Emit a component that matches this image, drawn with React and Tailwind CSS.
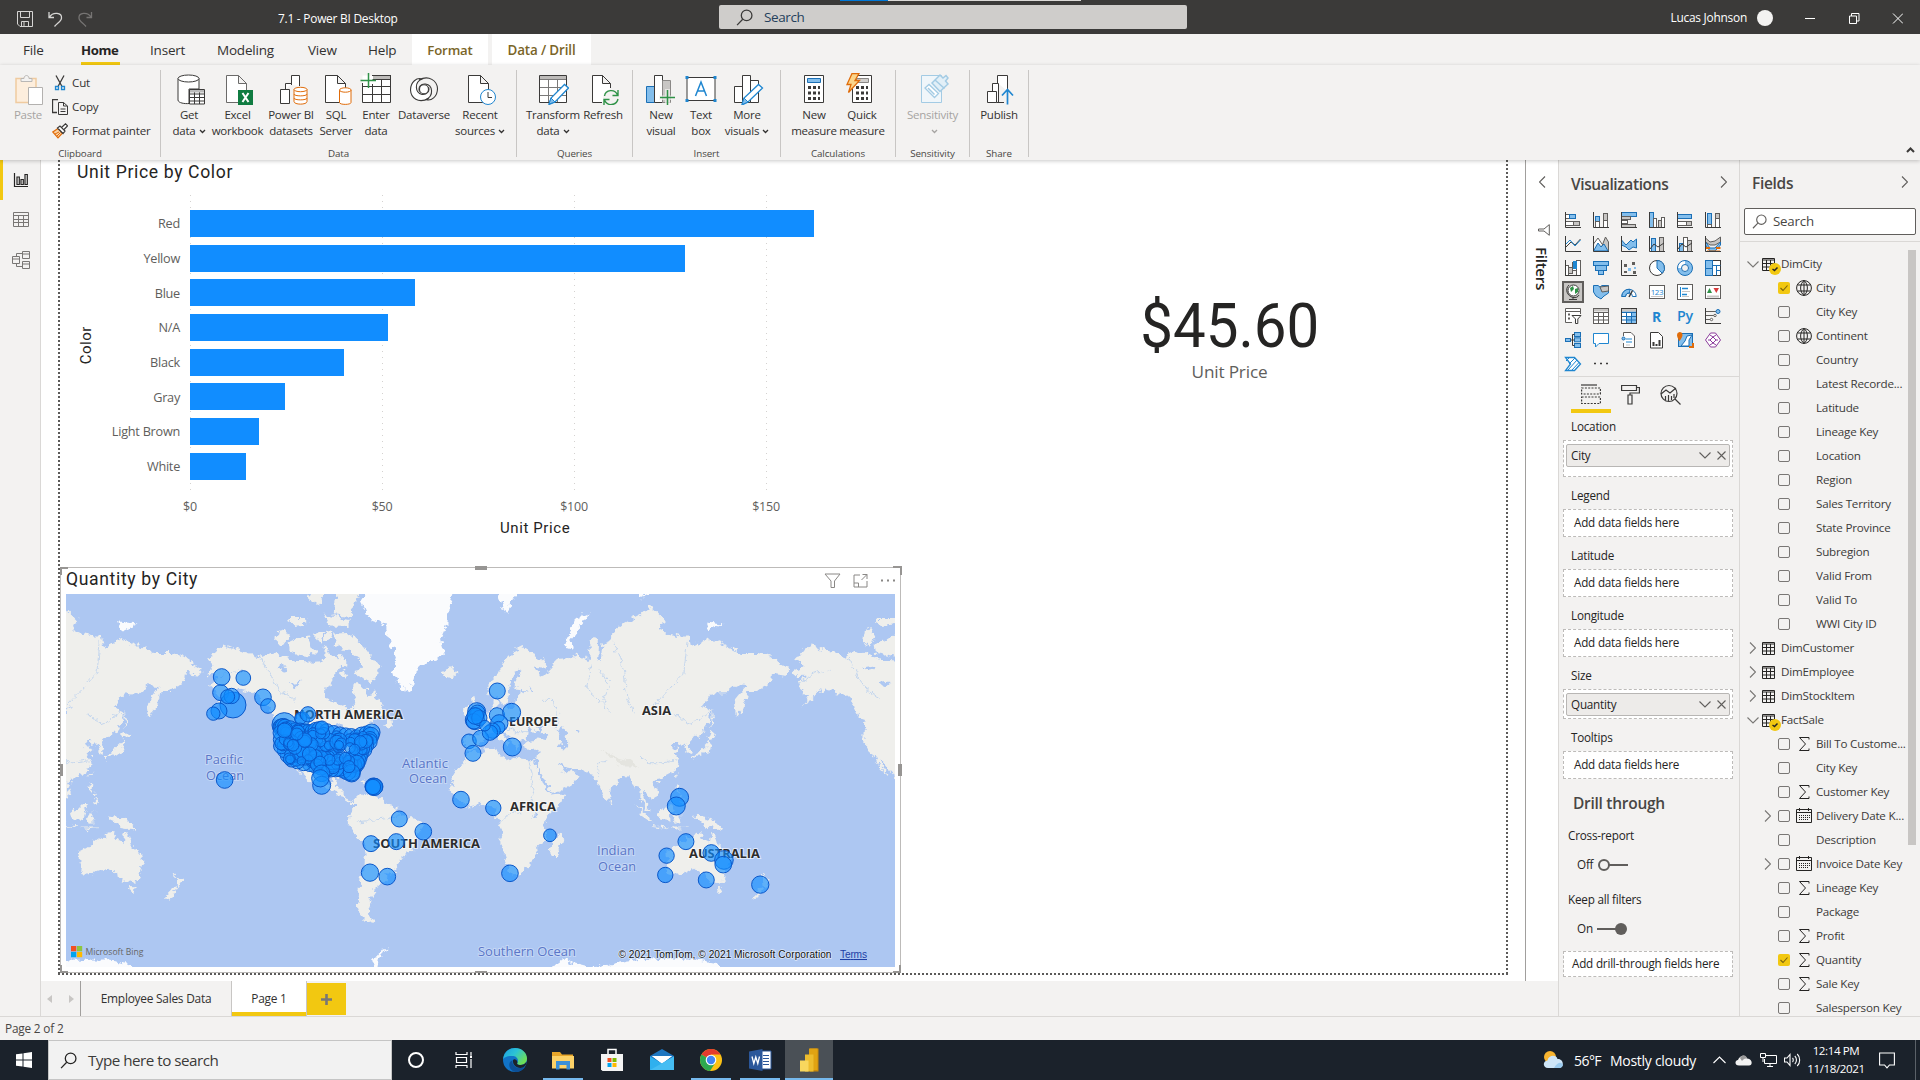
import React from "react";

const INK = "#3b3a39";
const BLUE = "#1f86d0";
const SKY = "#83beec";
const ORANGE = "#e06c0a";
const GREEN = "#2f9247";

/* ---------- ribbon icons (32 x 32) ---------- */

function Ico({ children, s = 32, vb = "0 0 32 32", className = "", ...rest }) {
  return (
    <svg width={s} height={s} viewBox={vb} fill="none" stroke={INK} strokeWidth="1" className={"shrink-0 " + className} {...rest}>
      {children}
    </svg>
  );
}

const page = "M4.5 2.5H16.5L24.5 10.5V29.5H4.5Z M16.5 2.5V10.5H24.5";

const ribbonIcons = {
  paste: (
    <Ico className="translate-x-[2px]">
      <path d="M2 5.500H22V29.500H2Z" fill="#fdeedd" stroke="#f0cba0" strokeWidth="1.500" />
      <path d="M7 8.500V5.500H10C10 1.500 15 1.500 15 5.500H18V8.500Z" fill="#f3f2f1" stroke="#b9b7b5" />
      <path d="M14.500 14.500H28.500V31.500H14.500Z" fill="#fff" stroke="#b3b1af" />
    </Ico>
  ),
  getData: (
    <Ico>
      <path d="M5 5.500V27C5 30 12 31 16 30.500V16H26V5.500" fill="#fff" />
      <ellipse cx="15.500" cy="5.500" rx="10.500" ry="3.500" fill="#fff" />
      <path d="M16.500 16.500H31.500V31H16.500Z M16.500 21H31.500M16.500 24.500H31.500M16.500 28H31.500M21.500 19V31M26.500 19V31" fill="#fff" />
      <path d="M17 17H31V19.500H17Z" fill="#bbb" stroke="none" />
    </Ico>
  ),
  excel: (
    <Ico>
      <path d={page} fill="#fff" stroke="#6b6a69" />
      <path d="M16 17H31V32H16Z" fill="#107c41" stroke="none" />
      <path d="M20.500 20L26.500 29M26.500 20L20.500 29" stroke="#fff" strokeWidth="2" />
    </Ico>
  ),
  datasets: (
    <Ico className="translate-x-[2px]">
      <path d="M3.500 16.500H12.500V30.500H3.500Z M8.500 16.500V10.500H14.500M14.500 12V2.500H22.500V13" fill="#fff" />
      <path d="M17 16.500V28.500C17 32 30 32 30 28.500V16.500" fill="#fff" stroke={ORANGE} />
      <ellipse cx="23.500" cy="16.500" rx="6.500" ry="2.200" fill="#fff" stroke={ORANGE} />
      <path d="M17 21C17 23.500 30 23.500 30 21M17 25C17 27.500 30 27.500 30 25" stroke={ORANGE} />
    </Ico>
  ),
  sql: (
    <Ico>
      <path d="M5.500 2.500H17.500L25.500 10.500V29.500H5.500Z M17.500 2.500V10.500H25.500" fill="#fff" />
      <path d="M19.500 17V29.500C19.500 32 31 32 31 29.500V17" fill="#fff" stroke={ORANGE} />
      <ellipse cx="25.300" cy="17" rx="5.800" ry="2.200" fill="#fff" stroke={ORANGE} />
    </Ico>
  ),
  enter: (
    <Ico>
      <path d="M2.500 2.500H30.500V29.500H2.500Z" fill="#fff" stroke="none" />
      <path d="M13 2.500H30V6.500H13Z" fill="#bdbbb9" stroke="none" />
      <path d="M30.500 2V29.500H2.500V10M2.500 13.500H30M2.500 21.500H30M12.500 6.500H30M12.500 11V29M21.500 6.500V29M12 2.500H30" />
      <path d="M8.500 0V15M0.500 7.500H16" stroke={GREEN} strokeWidth="1.500" />
    </Ico>
  ),
  dataverse: (
    <Ico>
      <g strokeWidth="1.100">
        <path d="M21 25.500C10 31 3 25 2.500 17C2.500 9 9 4 14 6C6 9 7 20 14 21.500C19 22 22 18 20.500 14" fill="#fff" />
        <path d="M11 7C21 1.500 29 8 29.500 15.500C29.500 24 23 28.500 18 26.500C26 23 25 12 17.500 11C13 10.500 10 14 11.500 18.500" />
        <circle cx="16" cy="16.200" r="4.500" fill="#fff" />
      </g>
    </Ico>
  ),
  recent: (
    <Ico>
      <path d={page} fill="#fff" />
      <circle cx="24" cy="24" r="7.500" fill="#fff" stroke={BLUE} />
      <path d="M24 19V24.500H28" />
    </Ico>
  ),
  transform: (
    <Ico>
      <path d="M2.500 2.500H29.500V29.500H2.500Z" fill="#fff" />
      <path d="M3 3H29V6.500H3Z" fill="#bdbbb9" stroke="none" />
      <path d="M3 6.500H29M3 14.500H29M3 22.500H29M11.500 7V29M20.500 7V29" stroke="#7a7978" />
      <path d="M12 31.500L14 25L27.500 11.500L31.500 15L18 29Z" fill="#fff" stroke={BLUE} strokeWidth="1.300" />
      <path d="M12 31L14 25L18 29Z" fill={SKY} stroke={BLUE} />
    </Ico>
  ),
  refresh: (
    <Ico>
      <path d="M15 29.500H5.500V2.500H15.500L23.500 10.500V15M15.500 2.500V10.500H23.500" fill="#fff" />
      <circle cx="24" cy="24.500" r="8" fill="#f3f2f1" stroke="none" />
      <g stroke={GREEN} strokeWidth="1.400">
        <path d="M17.500 23C18.500 16.500 28 15.500 30.500 22M31 17V22.500H25.500" />
        <path d="M31 26C29.500 33 20 33.500 17.500 27M17 32V26.500H22.500" />
      </g>
    </Ico>
  ),
  newVisual: (
    <Ico>
      <path d="M1.500 13.500H9.500V29.500H1.500Z" fill={SKY} stroke="#1b6fb5" />
      <path d="M9.500 2.500H17.500V29.500H9.500Z" fill="#fff" />
      <path d="M17.500 7.500H25.500V29.500H17.500Z" fill="#c8c6c4" stroke="#8a8886" />
      <path d="M20 16H25V32H20ZM14 22.500H31V27H14Z" fill="#f3f2f1" stroke="none" opacity=".7" />
      <path d="M22.500 17V32M15 24.500H30" stroke={GREEN} strokeWidth="1.500" />
    </Ico>
  ),
  textBox: (
    <Ico>
      <path d="M2 4.500H30V27.500H2Z" fill="#fff" />
      <path d="M10.500 23L16 9L21.500 23M12.500 18H19.500" stroke={BLUE} strokeWidth="1.500" />
      <path d="M0.500 3H3.500V6H0.500ZM28.500 3H31.500V6H28.500ZM0.500 26H3.500V29H0.500ZM28.500 26H31.500V29H28.500Z" fill={BLUE} stroke="none" />
    </Ico>
  ),
  moreVisuals: (
    <Ico className="translate-x-px">
      <path d="M2.500 13.500H10.500V29.500H2.500Z M10.500 2.500H18.500V29.500H10.500Z M18.500 7.500H26.500V29.500H18.500Z" fill="#fff" />
      <path d="M10 32L12 25L26.500 11.500L30.500 15L16 29Z" fill="#fff" stroke={BLUE} strokeWidth="1.300" />
      <path d="M10 31.500L12 25L16 29Z" fill={SKY} stroke={BLUE} />
    </Ico>
  ),
  measure: (
    <Ico>
      <path d="M6.500 2.500H25.500V29.500H6.500Z" fill="#fff" />
      <path d="M9.500 5.500H22.500V9.500H9.500Z" fill={SKY} stroke="#1b6fb5" />
      <path d="M10 14.500H22M10 20H22M10 25.500H22" strokeWidth="3" strokeDasharray="3 2" />
    </Ico>
  ),
  quick: (
    <Ico className="-translate-x-[3px]">
      <path d="M9.500 2.500H28.500V29.500H9.500Z" fill="#fff" />
      <path d="M13.500 5.500H25.500V9.500H13.500Z" fill="#d2d0ce" stroke="#8a8886" />
      <path d="M13 14.500H25M13 20H25M13 25.500H25" strokeWidth="3" strokeDasharray="3 2" />
      <path d="M9 0.500H16L12 7.500H16.500L5.500 19.500L8 11.500H4Z" fill="#fbd58b" stroke={ORANGE} strokeWidth="1.300" />
    </Ico>
  ),
  sensitivity: (
    <Ico className="translate-x-[2px]">
      <g stroke="#a3cbe4">
        <path d="M2.500 2.500H22.500V29.500H2.500Z" fill="#f0f6fa" />
        <path d="M6 15L10 11.500L19.500 20.500L15.500 24.500Z" fill="#fff" strokeWidth="1.300" />
        <path d="M9 15L15.500 21.500" strokeWidth="1.500" />
        <path d="M13 10L21 2L24 5L27 2.500L29 5L26.500 8L29 11L21 18.500Z" fill="#e2eff7" strokeWidth="1.500" />
        <path d="M16 7L25.500 15.500" strokeWidth="1.500" />
      </g>
    </Ico>
  ),
  publish: (
    <Ico>
      <path d="M4.500 18.500H13.500V29.500H4.500Z M9.500 18V10.500H15.500V29.500M14.500 10V2.500H24.500V18M13.500 29.500H21" fill="#fff" />
      <path d="M24.500 31.500V17M19 22.500L24.500 16.500L30 22.500" stroke={BLUE} strokeWidth="1.700" />
    </Ico>
  ),
};

function Caret({ className = "" }) {
  return (
    <svg width="7" height="5" viewBox="0 0 7 5" fill="none" stroke="currentColor" strokeWidth="1.300" className={"ml-[3px] inline-block " + className}>
      <path d="M1 1L3.500 3.500L6 1" />
    </svg>
  );
}

function RBtn({ icon, a, b, caret, w, dim }) {
  return (
    <div className={"flex flex-col items-center pt-[7px] " + w + (dim ? " text-[#a6a4a2]" : " text-[#323130]")}>
      {ribbonIcons[icon]}
      <div className="mt-[2px] h-4 text-[11.5px] leading-4 tracking-[-0.02em] whitespace-nowrap">{a}</div>
      <div className="flex h-4 items-center text-[11.5px] leading-4 tracking-[-0.02em] whitespace-nowrap">
        {b}
        {caret && <Caret />}
      </div>
    </div>
  );
}

function Group({ label, w, pl = "", children }) {
  return (
    <div className={"relative mt-[5px] flex h-[87px] flex-col border-r border-[#c8c6c4] " + w}>
      <div className={"-mt-[4px] flex flex-1 items-start " + pl}>{children}</div>
      <div className="h-3 text-center text-[9.8px] leading-[17px] tracking-[-0.01em] text-[#484644]">{label}</div>
    </div>
  );
}

function MiniRow({ icon, text }) {
  return (
    <div className="flex h-6 items-center">
      <div className="w-5">{icon}</div>
      <span className="text-[11.600px] tracking-[-0.015em] whitespace-nowrap text-[#323130]">{text}</span>
    </div>
  );
}

function SearchGlyph({ s = 16, color = INK, className = "" }) {
  return (
    <svg width={s} height={s} viewBox="0 0 16 16" fill="none" stroke={color} strokeWidth="1.200" className={className}>
      <circle cx="10" cy="6" r="5" />
      <path d="M6.300 9.700L1 15.200" />
    </svg>
  );
}

function TitleBar() {
  return (
    <div className="flex h-[34px] bg-[#3b3a39] text-white">
      <div className="flex w-[719px] items-center pt-[3px] pl-[17px]">
        <svg width="76" height="18" viewBox="0 0 76 18" fill="none" stroke="#d6d5d4" strokeWidth="1">
          <path d="M0.500 1.500H15.500V16.500H3L0.500 14Z M3.500 1.500V7.500H12.500V1.500M4.500 16.500V11.500H11.500V16.500M7 12V16" />
          <path d="M32 2V7.500H37M32.500 7C36 1.500 45 2.500 44.500 8C44.500 11 41 12.500 37.500 16.500" strokeWidth="1.300" />
          <path d="M74.500 2V7.500H69.500M74 7C70.500 1.500 61.500 2.500 62 8C62 11 65.500 12.500 69 16.500" stroke="#767473" strokeWidth="1.300" />
        </svg>
        <span className="ml-[185px] text-[11.9px] tracking-[-0.02em]">7.1 - Power BI Desktop</span>
      </div>
      <div className="relative flex w-[468px] pt-[5px]">
        <div className="absolute top-0 left-[121px] flex h-px w-[241px] bg-[#dcdad8]">
          <div className="h-px w-12 bg-[#0078d7]" />
        </div>
        <div className="flex h-6 w-full items-center rounded-[2px] bg-[#cfcdcb] pl-[17px]">
          <SearchGlyph s={17} />
          <span className="ml-[11px] text-[13.5px] tracking-[-0.03em] text-[#25405c]">Search</span>
        </div>
      </div>
      <div className="flex flex-1 items-center justify-end pt-px pr-[17px]">
        <span className="text-[11.9px] tracking-[-0.02em]">Lucas Johnson</span>
        <span className="ml-[10px] h-4 w-4 rounded-full bg-[#f3f2f1]" />
        <svg width="98" height="11" viewBox="0 0 98 11" fill="none" stroke="#fff" strokeWidth="1" className="mt-[2px] ml-[32px]">
          <path d="M0 5.500H10M44.500 3H51.500V10.500H44.500ZM46.500 3V0.500H54V8H51.500M88 0.500L98 10.500M98 0.500L88 10.500" />
        </svg>
      </div>
    </div>
  );
}

function TabsRow() {
  const t = "flex h-full items-center pt-[2px] text-[13.500px] text-[#323130] tracking-[-0.015em] whitespace-nowrap";
  return (
    <div className="flex h-[31px] bg-[#f3f2f1]">
      <div className={t + " w-[81px] pl-[23px]"}>File</div>
      <div className="relative flex w-[69px] items-center pt-[2px] text-[13.200px] font-bold tracking-[-0.03em] text-[#252423]">
        Home
        <span className="absolute bottom-0 left-0 h-[3px] w-[39px] bg-[#f2c811]" />
      </div>
      <div className={t + " w-[67px]"}>Insert</div>
      <div className={t + " w-[91px]"}>Modeling</div>
      <div className={t + " w-[60px]"}>View</div>
      <div className={t + " w-[44px]"}>Help</div>
      <div className="mr-1 flex w-[76px] items-center justify-center bg-white pt-[2px] text-[13.200px] font-semibold tracking-[-0.01em] text-[#7a6528]">Format</div>
      <div className="flex w-[99px] items-center justify-center bg-white pt-[2px] text-[13.400px] font-semibold tracking-[-0.01em] text-[#7a6528]">Data / Drill</div>
    </div>
  );
}

function Ribbon() {
  return (
    <div className="relative z-10 flex h-[95px] bg-[#f3f2f1] shadow-[0_1px_4px_rgba(0,0,0,0.22)]">
      <Group label="Clipboard" w="w-[161px]" pl="pl-[6px]">
        <RBtn icon="paste" a="Paste" w="w-[44px] mr-[2px]" dim />
        <div className="pt-[5px]">
          <MiniRow
            text="Cut"
            icon={
              <Ico s={16} vb="0 0 16 16">
                <path d="M4 0.500L10 11.500M12 0.500L6 11.500" strokeWidth="1.300" />
                <path d="M3.500 11.500H6.500V14.500H3.500ZM9.500 11.500H12.500V14.500H9.500Z" stroke={BLUE} strokeWidth="1.300" />
              </Ico>
            }
          />
          <MiniRow
            text="Copy"
            icon={
              <Ico s={16} vb="0 0 16 16">
                <path d="M5 13.500H0.500V0.500H6" strokeWidth="1.300" />
                <path d="M6.500 3.500H11.500L15.500 7V15.500H6.500Z M11.500 3.500V7H15.500M8.500 10H13.500M8.500 12.500H13.500" />
              </Ico>
            }
          />
          <MiniRow
            text="Format painter"
            icon={
              <Ico s={16} vb="0 0 16 16">
                <path d="M6 5.500L0.800 9L6 14.800L10.500 10Z" fill="#fbd0a0" stroke={ORANGE} strokeWidth="1.200" />
                <path d="M3 11L7 9M5 13L8.500 9.500" stroke={ORANGE} />
                <path d="M5.500 5L8 3L13 8L11 10.500ZM9.500 4.500L13.500 0.800L15.500 2.800L12 6.500" strokeWidth="1.200" fill="#fff" />
              </Ico>
            }
          />
        </div>
      </Group>
      <Group label="Data" w="w-[356px]" pl="pl-[6px]">
        <RBtn icon="getData" a="Get" b="data" caret w="w-[44px]" />
        <RBtn icon="excel" a="Excel" b="workbook" w="w-[53px]" />
        <RBtn icon="datasets" a="Power BI" b="datasets" w="w-[54px]" />
        <RBtn icon="sql" a="SQL" b="Server" w="w-[36px]" />
        <RBtn icon="enter" a="Enter" b="data" w="w-[44px]" />
        <RBtn icon="dataverse" a="Dataverse" w="w-[52px]" />
        <RBtn icon="recent" a="Recent" b="sources" caret w="w-[60px]" />
      </Group>
      <Group label="Queries" w="w-[116px]" pl="pl-[7px]">
        <RBtn icon="transform" a="Transform" b="data" caret w="w-[58px]" />
        <RBtn icon="refresh" a="Refresh" w="w-[42px]" />
      </Group>
      <Group label="Insert" w="w-[148px]" pl="pl-[8px]">
        <RBtn icon="newVisual" a="New" b="visual" w="w-[40px]" />
        <RBtn icon="textBox" a="Text" b="box" w="w-[40px]" />
        <RBtn icon="moreVisuals" a="More" b="visuals" caret w="w-[52px]" />
      </Group>
      <Group label="Calculations" w="w-[115px]" pl="pl-[9px]">
        <RBtn icon="measure" a="New" b="measure" w="w-[48px]" />
        <RBtn icon="quick" a="Quick" b="measure" w="w-[48px]" />
      </Group>
      <Group label="Sensitivity" w="w-[74px]" pl="justify-center">
        <RBtn icon="sensitivity" a="Sensitivity" caret w="w-[60px]" dim />
      </Group>
      <Group label="Share" w="w-[59px]" pl="justify-center">
        <RBtn icon="publish" a="Publish" w="w-[50px]" />
      </Group>
      <div className="flex flex-1 items-end justify-end pr-[5px] pb-[7px]">
        <svg width="9" height="6" viewBox="0 0 9 6" fill="none" stroke={INK} strokeWidth="2">
          <path d="M1 5L4.500 1.500L8 5" />
        </svg>
      </div>
    </div>
  );
}

/* ---------- left rail ---------- */

function Rail() {
  return (
    <div className="relative flex w-[41px] shrink-0 flex-col items-center border-r border-[#dad8d6] bg-[#f3f2f1]">
      <span className="absolute top-0 left-0 h-10 w-[3px] bg-[#f2c811]" />
      <div className="flex h-10 items-center">
        <Ico s={16} vb="0 0 16 16" stroke="#252423" strokeWidth="1.200" className="ml-px">
          <path d="M1.500 1V14.500H15M4 5H6.300V12.500H4ZM8 7.500H10.300V12.500H8ZM12 2.500H14.300V12.500H12Z" />
        </Ico>
      </div>
      <div className="flex h-10 items-center">
        <Ico s={16} vb="0 0 16 16" stroke="#797775" className="ml-px">
          <path d="M0.500 0.500H15.500V14.500H0.500ZM0.500 3.500H15.500M0.500 7.500H15.500M0.500 10.500H15.500M5.500 3.500V14.500M10.500 3.500V14.500" />
        </Ico>
      </div>
      <div className="flex h-10 items-center">
        <Ico s={18} vb="0 0 18 18" stroke="#797775" className="ml-px">
          <path d="M0.500 5.500H7.500V12.500H0.500ZM0.500 8H7.500M10.500 0.500H17.500V7.500H10.500ZM10.500 3H17.500M10.500 10.500H17.500V17.500H10.500ZM10.500 13H17.500M4.500 5.500V2.500H10.500M4.500 12.500V15.500H10.500" />
        </Ico>
      </div>
    </div>
  );
}

/* ---------- bar chart ---------- */

const bars = [
  ["Red", 624],
  ["Yellow", 495],
  ["Blue", 225],
  ["N/A", 197.500],
  ["Black", 153.500],
  ["Gray", 95],
  ["Light Brown", 69],
  ["White", 56],
];

function BarChart() {
  return (
    <div className="flex h-[407px] flex-col">
      <div className="h-[35px] pt-px pl-[17px] font-['Roboto'] text-[17.600px] leading-[22px] tracking-[0.036em] text-[#252423]">Unit Price by Color</div>
      <div className="flex">
        <div className="flex w-[46px] items-center justify-center pt-[2px] pl-[5px]">
          <span className="-rotate-90 font-['Roboto'] text-[15px] tracking-[0.03em] text-[#252423]">Color</span>
        </div>
        <div className="w-[84px] pt-[12px] pr-[10px]">
          {bars.map(([n]) => (
            <div key={n} className="flex h-[34.700px] items-center justify-end pb-[1px] text-[12.700px] tracking-[-0.02em] whitespace-nowrap text-[#605e5c]">{n}</div>
          ))}
        </div>
        <div className="relative h-[299px] flex-1 pt-[15px]">
          <div className="absolute inset-0 flex">
            {[0, 1, 2, 3].map((i) => (
              <div key={i} className="h-full w-[192px] shrink-0 bg-[repeating-linear-gradient(to_bottom,#d4d2d0_0_1px,transparent_1px_6px)] bg-[length:1px_100%] bg-no-repeat" />
            ))}
          </div>
          {bars.map(([n, w]) => (
            <div key={n} className="relative h-[34.700px]">
              <div className="h-[27px] bg-[#118dff]" style={{ width: w }} />
            </div>
          ))}
        </div>
      </div>
      <div className="ml-[34px] flex pt-[4px] text-[12.500px] leading-[18px] tracking-[-0.02em] text-[#605e5c]">
        {["$0", "$50", "$100", "$150"].map((v) => (
          <span key={v} className="w-[192px] shrink-0 text-center">{v}</span>
        ))}
      </div>
      <div className="ml-[440px] pt-[2px] font-['Roboto'] text-[15px] leading-[20px] tracking-[0.04em] text-[#252423]">Unit Price</div>
    </div>
  );
}

/* ---------- map ---------- */

const K = 1.6306;
const R = 93.4;
const px = (lon) => 414 + K * lon;
const py = (lat) => 220 - R * Math.asinh(Math.tan((lat * Math.PI) / 180));
const toPath = (s) => {
  const n = s.split(" ").map((p) => p.split(",").map(Number));
  return "M" + n.map(([a, b]) => px(a).toFixed(1) + " " + py(b).toFixed(1)).join("L") + "Z";
};

const land = [
  "-168,65.5 -162,66.5 -166,68.3 -162,70.2 -156.5,71.3 -150,70.5 -141,69.7 -135,69 -129,70 -124,69.5 -118,69 -113,68 -108,68 -102,67.8 -96,68 -95,71.5 -92,69.5 -88,68.5 -85,69.5 -82,68.5 -82,67 -86,66.3 -90,64 -94,61 -94.5,59 -92.5,57 -87,56 -82.3,55 -82,52.8 -79.8,51.3 -79,54 -76.5,56.5 -78,59 -77.5,62.3 -73.5,62.3 -70,60.8 -69.5,58.8 -66,58.8 -64.5,60.2 -62,57 -60,55 -56,52.5 -58,51.3 -66,50.2 -69,48.5 -65,49.2 -64.5,46.5 -60.5,47 -61,45.3 -66,43.5 -65,45.3 -70,43.7 -70.7,42 -74,40.6 -75.5,38 -76,36.5 -75.7,35.2 -78,34 -81,32 -81.4,30.4 -80,27 -80.5,25.2 -82,26.8 -82.8,29 -84.5,30 -89,30.3 -90,29.2 -94,29.6 -97.2,27.8 -97.6,25 -97.7,22 -96,19.2 -94.3,18.2 -91,18.7 -90.3,21 -87,21.5 -87.7,18.5 -88.8,15.9 -83.3,15 -83.7,11 -81.5,9 -79.5,9.5 -77.3,8.5 -80.3,7.5 -83,8.2 -85.7,10 -87.7,13 -92,14.4 -95,16 -99.5,16.7 -105.5,20 -106,23 -109.3,26 -112.5,29.8 -114.7,31.7 -113,28.5 -110,24.2 -109.6,23 -112,25.5 -115,28 -117,32.5 -120.6,34.6 -122.5,37.5 -124.3,40.3 -124,46 -124.7,48.4 -122.5,49 -127,51 -130,54.5 -133.5,57.5 -138,59.2 -144,60 -148,60.5 -152,59.3 -151,61 -154,59 -158,56.5 -164,54.7 -160,56.5 -157.5,58.5 -162,58.7 -162,60 -165.5,61.5 -164,63 -161,63.7 -161.5,64.6 -166,64.5",
  "-61.5,66.7 -65,62.8 -71,63.5 -77,64.5 -73,66.5 -73,68.5 -79,70 -88,71 -89.5,73.5 -81,73.6 -77,72.7 -71,71 -67,69.2",
  "-117,69.8 -105,69 -101,70 -105,73 -110,72.8 -118,71.7",
  "-125,72 -121,71.3 -117,73 -120,74.3 -124,74",
  "-90,76.4 -80,76.2 -76,78.5 -70,80 -62,82 -80,83 -92,81 -88,79",
  "-96,76.5 -80,75.7 -80,74.6 -92,74.7",
  "-117,76 -106,76 -106,75 -115,74.8",
  "-105,78.5 -98,78 -95,79.5 -98,81",
  "-86,64.5 -81,64 -84,66",
  "-101,73.7 -96,73.8 -97,71.7 -101,72",
  "-95,74 -90.5,73.8 -92,72.5 -95,72.2",
  "-59,47.7 -53.5,46.8 -53.5,49 -56,51.4",
  "-24,65.5 -22,64 -18,63.4 -13.8,65 -16,66.4 -21,66",
  "-85,22 -80,23 -74.5,20.2 -78,20",
  "-74,19.8 -68.5,18.7 -72,18",
  "-77.3,8.5 -75,10.8 -71.8,12.3 -71,11 -67,10.6 -62,10.6 -57,6 -51.5,4.3 -50,0.5 -48,-1 -44,-2.5 -40,-2.9 -35.3,-5.3 -35,-8.5 -39,-13 -39.2,-17.5 -41,-22 -45,-23.5 -48.5,-26 -49,-29 -52.5,-33 -54.5,-34.8 -58,-34 -57,-36.5 -58.5,-38.5 -62,-39 -62.5,-41 -65,-41 -64,-42.5 -67.3,-45.8 -66,-47.7 -69,-50.5 -68.5,-52.5 -65.2,-54.7 -69,-55.3 -73.5,-52.5 -75.5,-49 -74.5,-45 -73.5,-40 -73.5,-37 -71.5,-33 -71.3,-29 -70.3,-24 -70.2,-18.4 -76,-14 -79,-8 -81.2,-5.5 -80,-2.8 -80.5,-0.5 -78.5,2 -77.3,4.5",
  "-6,35.8 -2,35.2 3,36.8 10,37.3 11,34.5 15.2,32.4 19,30.3 20.5,32.7 25,31.6 30,31.3 34.2,31.3 32.5,30 34.5,27 37.2,21 38.5,18 43.2,12.5 43.5,11.3 51.2,11.8 50,8 46,2.5 41.5,-1.7 39,-5.5 40.6,-12 40.5,-15.5 35,-20 35.4,-24 32.8,-26.5 30.5,-30.5 26,-33.8 20,-34.8 18.3,-33.5 15.2,-27 14.3,-22 11.8,-17 13.7,-11 12,-5 9,-1 9.5,3.9 6,4.3 2,6.3 -4,5.2 -7.5,4.4 -12.5,7.5 -16.8,12.5 -17.4,14.8 -16.2,19 -17,21.5 -13,27.8 -9.7,30 -9,32.8",
  "49.3,-12 50.4,-15.5 47.2,-25 44,-25 43.5,-21.5 44.5,-16.5",
  "-9,37 -9.3,39 -8.8,43.3 -1.8,43.4 -1.2,46 -4.6,48.4 -1.6,49.5 1.6,50.8 4.5,52.5 8.5,53.7 8.2,57 10.5,57.6 10.8,54.5 14,54.2 19,54.4 21,55.3 21.2,57 24,57.2 24,59.2 29.5,59.9 23,60 21.3,61 21.5,63 25.3,65 22,65.7 17.5,62 18.5,60 16.5,57.5 14.2,55.5 12.8,55.6 11.2,59 7.5,58 5.2,59.5 5.2,62 10.5,64.3 14,67.5 20,70 26,71 31,70 41,67.3 40,66.2 33.5,66.7 37,64 40,64.6 44,66.2 46,68.2 54,68.4 60.5,69.5 68,68.3 67,71.5 70,73 73,71.5 72.5,68 74,67.5 75,71.5 81,72.3 81,73.7 88,75.2 98,76.4 104.3,77.7 113,75.8 110,74 113.5,73.6 123,73 128,73 129.5,71 140,72.6 150,71.5 160,69.8 170,69.8 178,69.3 185,67.2 190,66 187,64.4 179,64.8 178.5,62.7 170.5,60 164,60 163,57 161.8,55 157,51 155.8,56.5 163.5,61.5 156.5,61.7 151,59.3 142,59.2 136,55 141,53 140.3,48.5 135.5,44 131,42.7 127.5,40 129.3,36 126.5,34.5 126.7,37.5 124.7,39.8 121.5,39 121.5,40.8 118,39 119,37.3 122.3,37 119.3,35 121.8,31.5 121.5,28.5 118.5,24.5 114,22.4 108.5,21.6 106,19.5 109.2,13 108,10.8 105,8.7 105,10.5 100.8,13.3 99.5,11 100.5,7 103.4,4.2 104,1.4 101.3,2.8 99.6,6.8 98.3,9 98.5,14 97,17 94.3,16 92,21.8 90,22 87,21.4 82.3,16.6 80.2,15 79.8,10.3 77.5,8 76,10.5 73,17 72.7,21 70,20.8 69,22.3 66.5,25.3 61,25.2 57,26.8 51.5,27.8 48.5,30 50.3,26.5 51.5,25 54,24.2 56.3,26 59.8,22.5 57.5,19 52,15.7 45,12.8 43,13.5 42.5,16.5 39,21 35,28 35,31.5 36,36.6 31,36.6 27.5,36.8 26.3,39.2 29,41 35,42 41,41.3 41.5,42.5 37.5,45 39,47.2 35,46.3 36.5,45.3 33.5,44.5 31,46.6 28.5,44 28,42 29,41.1 26,40.7 23.5,40.2 24,38 22.7,36.5 19.4,41 19,42.2 13.7,45.2 12.4,44.5 16,41.5 18.4,40.2 16.5,38.5 15.7,38.2 15.2,40 10.5,43 8.8,44.4 3.5,43.3 3,41.8 -0.2,39.5 -1,37.6 -5,36.3",
  "-5.5,50.2 1.4,51.3 0,53.5 -2,56 -3,58.5 -5.5,58 -4.8,54.5 -3,53.8 -4.8,52",
  "-10,52 -6.3,52.3 -6,54.8 -9.5,54.2",
  "130,31.3 131.5,33.8 135.5,33.6 137,34.6 140.9,35.6 142,39.5 141.3,41.3 139.8,39.5 136.5,37 133,35.5 130,33.5",
  "140,42 145.3,43.3 141.8,45.4 140.5,43",
  "142,54 143.5,49 142,46",
  "95.3,5.6 98,4 104,-2 105.8,-5.8 102.3,-4 98.7,1.5",
  "105.3,-6.7 114.4,-7.7 114,-8.6 106,-7.4",
  "109,1.5 113,3.2 116.8,7 119,5 117.5,1 116,-3.8 110.3,-2.8",
  "120,0 125,1.5 121.500,0.2 123,-5 120,-5.4 119,-3",
  "116,-8.300 127,-8.200 120,-9.500",
  "131,-1 138,-1.7 145,-4.5 148,-8 150.5,-10.5 146,-9 143,-9.2 138,-8.3 137.5,-5 133,-4",
  "120.5,18.4 122.2,18.3 121.6,14.2 124,13 120.7,13.8",
  "122,7 126,9.5 126.3,6.5 124,6",
  "122.5,11.5 125,12.3 124.5,10",
  "109,19.8 111,19.8 109.5,18.3",
  "120.2,23.5 121.8,25.2 120.9,22",
  "80,9.5 81.8,7 80.3,6",
  "113.7,-22.5 114,-26.5 115.8,-32 115.2,-34.2 118,-35 124,-33.8 131,-31.5 135.5,-34.8 138,-33 138.5,-35.6 141,-38.2 146.4,-39 150,-37.4 151.2,-33.5 153.5,-28.5 153,-25.3 149.5,-22 146.3,-19 145.3,-15 142.5,-10.8 141.6,-13 140.8,-17.5 138.5,-16.7 135.5,-14.9 136.8,-12.2 132.5,-11.4 129.5,-14.9 127,-14 122.5,-17.8 119,-20",
  "144.7,-40.8 148.3,-40.9 147.5,-43.3 146,-43.4",
  "172.8,-34.5 175.5,-37 178.3,-37.8 175.3,-41.5 174,-39.5",
  "172.7,-40.6 174.2,-41.7 170.5,-45.8 168.4,-46.6 166.6,-45.8 171,-42.5",
];

const ice = [
  "-73,78.3 -68,75.9 -58,75 -54.5,71 -51,69.5 -53.5,66.5 -51.5,63.5 -48.5,61 -43.5,59.9 -42,62 -40,65 -33,67.8 -26,68.5 -22,70.3 -24,72.5 -20,75 -19,78 -12,81.5 -30,83 -60,82.5 -67,80",
  "11,79.300 16,76.6 21,78.5 26,80",
  "52,71 57,70.7 56,72.600 68,76.8 60,76 54,73.5",
  "138,75.5 150,75.2 140,74",
  "95,80 103,79 98,78.5",
  "-57,-63.3 -60,-63.8 -66,-67 -67,-70 -64,-70 -62,-66",
  "40,-70 42,-68 47,-67.600 52,-65.900 57,-67 70,-68.2 80,-67.5 90,-66.5 100,-66 110,-66.3 130,-66.2 145,-67.3 155,-70",
];

const water = [
  "47,45 51.5,47 53,45 51,43 54,41 54,37.2 50,37.5 49,41",
  "-92,47 -85,48.5 -84,46.5 -88,46.5",
  "-88,42 -86.500,42 -85,46 -87,45.500",
  "-125,66.5 -118,67 -121,65.5",
  "-116,62.3 -109,62.8 -113,61",
  "-99,53.8 -97,50.5 -96.5,51",
  "31,61.500 33,60 31,60",
  "32,0.5 34.5,0.3 33,-2.5",
  "104,51.500 109.500,55.500 106,52",
  "58.500,46.500 61.500,46 60,43.700",
];

const landD = land.map(toPath).join("");
const iceD = ice.map(toPath).join("");
const waterD = water.map(toPath).join("");
const riverD = [
  "30,31 32,24 31,18 33,10 31,2", "68,67 65,61 72,58 80,53", "82,72 88,66 90,58 95,52", "127,72 125,65 115,60 106,55",
  "140,53 130,48 120,52", "46,46 48,52 45,57 38,57", "-50,-1 -58,-3 -67,-4 -75,-5", "-135,69 -128,64 -122,60 -114,57",
  "121,31 112,30 104,30 98,33", "29,45 20,45 12,48", "-165,62 -155,65 -145,66", "12,-6 20,2 26,0", "73,66 80,62 75,56", "72,24 73,30 78,31",
]
  .map((s) => toPath(s).slice(0, -1))
  .join("");

/* bubble positions, in thirds of a pixel */
const bubbles = [
  [512, 398, 25], [515, 351, 26], [580, 354, 23], [549, 435, 40], [545, 408, 24], [533, 410, 22], [507, 453, 25], [490, 461, 21],
  [639, 412, 26], [654, 438, 23], [524, 660, 26], [815, 676, 28], [811, 655, 27], [970, 679, 26], [974, 680, 26], [972, 681, 27],
  [969, 681, 24], [1048, 777, 25], [1120, 815, 26], [1039, 845, 25], [963, 851, 25], [960, 938, 27], [1012, 950, 26], [1233, 719, 26],
  [1257, 544, 23], [1269, 580, 25], [1342, 393, 25], [1341, 466, 24], [1385, 457, 28], [1387, 561, 28], [1348, 490, 27], [1346, 503, 20],
  [1328, 512, 24], [1292, 535, 25], [1320, 518, 24], [1275, 480, 30], [1280, 455, 28], [1278, 460, 17], [1282, 458, 24], [1272, 484, 24],
  [1288, 474, 24], [1276, 468, 26], [1305, 497, 17], [1330, 744, 24], [1500, 826, 20], [1380, 940, 26], [1889, 712, 28], [1879, 738, 28],
  [1908, 845, 25], [1850, 887, 24], [1846, 945, 24], [1969, 960, 25], [1984, 879, 26], [2022, 900, 29], [2020, 914, 26], [2131, 974, 27],
];

const hull = [[690, 500], [705, 500], [750, 515], [775, 516], [810, 510], [870, 523], [920, 531], [965, 517], [958, 545], [932, 580], [922, 612], [905, 640], [870, 625], [830, 628], [780, 612], [725, 600], [694, 558]];
const inside = (x, y) => {
  let r = false;
  for (let i = 0, j = hull.length - 1; i < hull.length; j = i++) {
    const [a, b] = hull[i];
    const [c, d] = hull[j];
    if (b > y !== d > y && x < ((c - a) * (y - b)) / (d - b) + a) r = !r;
  }
  return r;
};
const cluster = (() => {
  let s = 42;
  const rnd = () => ((s = (s * 16807) % 2147483647), s / 2147483647);
  const out = [[703, 495, 38], [757, 478, 23], [752, 475, 19], [774, 463, 24]];
  hull.forEach(([x, y], i) => {
    const [nx, ny] = hull[(i + 1) % hull.length];
    for (let t = 0; t < 1; t += 0.34) out.push([x + (nx - x) * t, y + (ny - y) * t, 22 + rnd() * 5]);
  });
  while (out.length < 190) {
    const x = 680 + rnd() * 300;
    const y = 465 + rnd() * 185;
    if (inside(x, y)) out.push([x, y, 13 + rnd() * 11]);
  }
  out.push([815, 640, 26], [718, 597, 19], [720, 598, 14], [905, 638, 26], [897, 620, 19], [816, 503, 21]);
  return out;
})();

const mapTexts = [
  [228, 125, 109, "NORTH AMERICA"],
  [307, 253.500, 107, "SOUTH AMERICA"],
  [443, 131.500, 49, "EUROPE"],
  [576, 120.500, 29, "ASIA"],
  [444, 217, 46, "AFRICA"],
  [623, 263.500, 71, "AUSTRALIA"],
];
const seaTexts = [
  [139, 170, 38, "Pacific"], [140, 186, 38, "Ocean"], [336, 173.500, 46, "Atlantic"], [343, 189, 38, "Ocean"],
  [531, 260.500, 38, "Indian"], [532, 276.500, 38, "Ocean"], [412, 362, 98, "Southern Ocean"],
];

function WorldMap() {
  return (
    <svg width="829" height="373" viewBox="0 0 829 373" className="bg-[#adc7f2]">
      <defs>
        <filter id="coast" x="-5%" y="-5%" width="110%" height="110%">
          <feTurbulence type="fractalNoise" baseFrequency="0.16" numOctaves="3" seed="7" result="n" />
          <feDisplacementMap in="SourceGraphic" in2="n" scale="9" xChannelSelector="R" yChannelSelector="G" />
          <feGaussianBlur stdDeviation="0.35" />
        </filter>
        <g id="world">
          <path d={landD} fill="#efefec" />
          <path d={iceD} fill="#fafbfd" />
          <path d={waterD} fill="#adc7f2" />
          <path d={riverD} fill="none" stroke="#b9cfee" strokeWidth="0.800" />
          <path d={toPath("73,37 80,33 88,28 97,28 92,31 83,33")} fill="#e4e4df" />
        </g>
      </defs>
      <g filter="url(#coast)">
        <use href="#world" x="-587" />
        <use href="#world" />
        <use href="#world" x="587" />
      </g>
      <g fontFamily="Open Sans, Noto Sans, sans-serif" fontSize="13" paintOrder="stroke" stroke="#fff" strokeOpacity="0.600" strokeWidth="2">
        {mapTexts.map(([x, y, w, t]) => (
          <text key={t} x={x} y={y} textLength={w} lengthAdjust="spacingAndGlyphs" fontWeight="700" fill="#2c2c2c">{t}</text>
        ))}
        {seaTexts.map(([x, y, w, t], i) => (
          <text key={i} x={x} y={y} textLength={w} lengthAdjust="spacingAndGlyphs" fill="#5a76c8" strokeOpacity="0.300">{t}</text>
        ))}
      </g>
      <g transform="translate(-16 -34) scale(0.3333)" fill="#118dff" fillOpacity="0.650" stroke="#0a57c9" strokeWidth="3">
        {cluster.concat(bubbles).map(([x, y, r], i) => (
          <circle key={i} cx={x} cy={y} r={r - 1} />
        ))}
      </g>
      <path d="M5 352H10.300V357.300H5Z" fill="#f25022" />
      <path d="M10.900 352H16.200V357.300H10.900Z" fill="#8dc63f" />
      <path d="M5 357.900H10.300V363.200H5Z" fill="#00a4ef" />
      <path d="M10.900 357.900H16.200V363.200H10.900Z" fill="#ffb900" />
      <text x="19.500" y="361" textLength="58" lengthAdjust="spacingAndGlyphs" fontSize="9.500" fontFamily="Open Sans, sans-serif" fill="#666">Microsoft Bing</text>
      <g fontFamily="Liberation Sans, Arial, sans-serif" fontSize="10.200">
        <text x="552.500" y="364" textLength="213" lengthAdjust="spacing" fill="#111" paintOrder="stroke" stroke="#fff" strokeOpacity="0.600" strokeWidth="1.500">© 2021 TomTom, © 2021 Microsoft Corporation</text>
        <text x="774" y="364" textLength="27" fill="#1d3fa6" textDecoration="underline">Terms</text>
      </g>
    </svg>
  );
}

function MapVisual() {
  const h = "absolute border-[#979593] ";
  return (
    <div className="relative h-[406px] w-[841px] border border-[#bdbbb9] pt-[3px] pl-[5px]">
      <span className={h + "-top-[1px] -left-px h-2 w-2 border-t-2 border-l-2"} />
      <span className={h + "-top-[2px] -right-[2px] h-[9px] w-[9px] border-t-2 border-r-2"} />
      <span className={h + "-bottom-px -left-px h-2 w-2 border-b-2 border-l-2"} />
      <span className={h + "-right-px -bottom-px h-2 w-2 border-r-2 border-b-2"} />
      <span className="absolute -top-[2px] left-[414px] h-1 w-3 bg-[#979593]" />
      <span className="absolute -bottom-px left-[414px] h-[2px] w-3 bg-[#979593]" />
      <span className="absolute top-[196px] -left-px h-3 w-[3px] bg-[#979593]" />
      <span className="absolute top-[196px] -right-[2px] h-3 w-1 bg-[#979593]" />
      <div className="flex h-[23px] items-start justify-between pr-[4px]">
        <span className="font-['Roboto'] text-[17.600px] leading-[17px] tracking-[0.036em] text-[#252423]">Quantity by City</span>
        <svg width="72" height="16" viewBox="0 0 72 16" fill="none" stroke="#8a8886" strokeWidth="1" className="mt-[2px]">
          <path d="M1 1H16L10.500 8V14.500H7V8Z M36 2H30V14H43V8M30 10H34.500V14M38.500 1.500H43V6M43 1.500L37.500 7" />
          <path d="M57 7.500H59M63 7.500H65M69 7.500H71" strokeWidth="2" />
        </svg>
      </div>
      <WorldMap />
    </div>
  );
}

function Canvas() {
  return (
    <div className="flex h-[821px] bg-white pl-[17px]">
      <div className="relative flex h-[815px] w-[1450px] pl-[2px]">
        <span className="absolute top-0 left-0 h-full w-[2px] bg-[repeating-linear-gradient(to_bottom,#5b5a59_0_2px,transparent_2px_4px)]" />
        <span className="absolute top-0 right-0 h-full w-[2px] bg-[repeating-linear-gradient(to_bottom,#5b5a59_0_2px,transparent_2px_4px)]" />
        <span className="absolute bottom-0 left-0 h-[2px] w-full bg-[repeating-linear-gradient(to_right,#5b5a59_0_2px,transparent_2px_4px)]" />
        <div className="w-[842px] shrink-0">
          <BarChart />
          <MapVisual />
        </div>
        <div className="flex flex-1 flex-col items-center pt-[133px] pl-[49px]">
          <div className="origin-center scale-x-[0.955] font-['Roboto'] text-[61px] leading-[66px] tracking-[0] text-[#252423]">$45.60</div>
          <div className="mt-[2px] text-[17.200px] leading-[22px] tracking-[-0.01em] text-[#605e5c]">Unit Price</div>
        </div>
      </div>
    </div>
  );
}

function PageTabs() {
  return (
    <div className="flex h-[35px] bg-[#f3f2f1] text-[11.900px] tracking-[-0.02em] text-[#323130]">
      <div className="flex w-10 items-center justify-between border-r border-[#a19f9d] px-[6px]">
        <svg width="5" height="8" viewBox="0 0 5 8" fill="#c8c6c4"><path d="M5 0V8L0 4Z" /></svg>
        <svg width="5" height="8" viewBox="0 0 5 8" fill="#c8c6c4"><path d="M0 0V8L5 4Z" /></svg>
      </div>
      <div className="flex w-[150px] items-center justify-center">Employee Sales Data</div>
      <div className="relative flex w-[76px] items-center justify-center border-x border-[#c8c6c4] bg-white">
        Page 1
        <span className="absolute bottom-0 left-0 h-1 w-full bg-[#f2c811]" />
      </div>
      <div className="mt-[2px] flex h-8 w-[39px] items-center justify-center bg-[#f2c811]">
        <svg width="11" height="11" viewBox="0 0 11 11" stroke="#797775" strokeWidth="2.600"><path d="M5.500 0V11M0 5.500H11" /></svg>
      </div>
    </div>
  );
}

/* ---------- visualization picker icons (16 x 16) ---------- */

const G = "#c8c6c4";
const D = "#605e5c";
const DB = "#1b6fb5";
const axes = <path d="M0.500 0V15.500H16" stroke={INK} />;
const r = (x, y, w, h, f, s) => <rect x={x} y={y} width={w} height={h} fill={f} stroke={s} />;

const viz = [
  <>{r(0.5, 2.5, 5, 4, "#fff", D)}{r(4.5, 2.5, 6, 4, SKY, DB)}{r(0.5, 9.5, 8, 4, "#fff", D)}{r(8.5, 9.5, 6, 4, G, D)}{axes}</>,
  <>{r(2.5, 4.500, 4, 5, SKY, DB)}{r(2.5, 9.500, 4, 6, "#fff", D)}{r(10.5, 1.500, 4, 7, G, D)}{r(10.5, 8.500, 4, 7, "#fff", D)}{axes}</>,
  <>{r(0.5, 0.5, 15, 4, SKY, DB)}{r(0.5, 4.5, 9, 3, G, D)}{r(0.5, 8.5, 6, 3, "#fff", D)}{r(0.5, 12.500, 14, 3, G, D)}{axes}</>,
  <>{r(0.5, 0.5, 4, 15, SKY, DB)}{r(4.5, 6.500, 3, 9, "#fff", D)}{r(9.5, 8.5, 3, 7, G, D)}{r(12.5, 5.5, 3, 10, "#fff", D)}{axes}</>,
  <>{r(0.5, 2.5, 14, 4, SKY, DB)}{r(0.5, 9.5, 9, 4, "#fff", D)}{r(9.5, 9.5, 5, 4, G, D)}{axes}</>,
  <>{r(2.5, 1.500, 4, 11, SKY, DB)}{r(2.5, 12.500, 4, 3, "#fff", D)}{r(10.5, 1.500, 4, 5, G, D)}{r(10.5, 6.500, 4, 9, "#fff", D)}{axes}</>,
  <><path d="M1 11L6 6L10 9L15.500 3" stroke={INK} /><path d="M1 8L5 4L10 10L15.500 4" stroke={BLUE} />{axes}</>,
  <><path d="M7 15L12.500 1L15.500 6V15Z" fill={G} stroke={D} /><path d="M0.500 8L5 2L9 8" stroke={D} fill="#fff" /><path d="M0.500 15L5 7L8 11L11 8L15 15Z" fill={SKY} stroke={DB} />{axes}</>,
  <><path d="M0.500 4L5 9L10 4L12 6L15.500 3V12L12 11L8 14L5 11L0.500 9Z" fill={SKY} stroke={DB} />{axes}</>,
  <>{r(2.5, 2.500, 4, 13, SKY, DB)}{r(10.5, 1.500, 4, 14, G, D)}<path d="M1 13L5 8L9 11L15 7" stroke={INK} />{axes}</>,
  <>{r(2.5, 7.500, 4, 8, SKY, DB)}{r(6.5, 1.500, 4, 14, "#fff", D)}{r(10.5, 4.500, 4, 11, G, D)}<path d="M1 13L5 8L9 11L15 7" stroke={INK} />{axes}</>,
  <><path d="M0.500 2L5 6L10 5L15.500 1V6L10 9L5 9L0.500 6Z" fill={G} stroke={D} /><path d="M0.500 6L5 12L10 12L15.500 6V9L10 15H5L0.500 9Z" fill={SKY} stroke={DB} /><path d="M1 12H5M11 12H15.500" stroke={ORANGE} strokeWidth="2" /><path d="M2 15H15" stroke={ORANGE} />{axes}</>,
  <>{r(0.5, 5.500, 3, 10, "#fff", D)}{r(3.5, 7.500, 4, 6, G, D)}{r(7.5, 2.500, 4, 8, "#fff", D)}{r(11.5, 0.500, 4, 15, "#fff", D)}<path d="M8 1H12V9H8Z" fill={BLUE} stroke="none" />{axes}</>,
  <>{r(0.5, 1.500, 15, 4, SKY, DB)}{r(2.5, 5.500, 11, 5, SKY, DB)}{r(5.5, 10.500, 5, 4, SKY, DB)}</>,
  <><path d="M3 4H6V7H3ZM11 2H14V5H11ZM3 11H6V13H3ZM12 11H15V14H12Z" fill={D} stroke="none" /><path d="M7 8H10V11H7Z M13 7H15V9H13Z" fill={SKY} stroke="none" />{axes}</>,
  <><circle cx="8" cy="8" r="7.500" fill="#fff" stroke={INK} /><path d="M8 8V0.500A7.500 7.500 0 0 1 13.300 13.300Z" fill={SKY} stroke={DB} /></>,
  <><circle cx="8" cy="8" r="5.500" stroke={SKY} strokeWidth="4" /><path d="M8 2.500A5.500 5.500 0 0 0 2.500 8" stroke="#fff" strokeWidth="4" /><circle cx="8" cy="8" r="7.500" stroke={DB} /><circle cx="8" cy="8" r="3.500" stroke={DB} fill="#f3f2f1" /></>,
  <>{r(0.5, 0.5, 15, 15, "#fff", INK)}{r(0.5, 0.5, 7, 15, SKY, DB)}<path d="M0 8.500H8M7.500 5.500H15.500M11.500 5.500V15.500M11.500 10.500H15.500" stroke={DB} /></>,
  <><circle cx="8.500" cy="6.500" r="5.500" fill="#fff" stroke={INK} /><path d="M5 4L8 2L9 5L6 8ZM10 5L13 4V8L10 10Z" fill={GREEN} stroke="none" /><path d="M4 1C-0.500 5 2 12 8 13.500C11 14 13 13 14 11M8 13.500V15.500M4 15.500H12" stroke={INK} /></>,
  <><path d="M0.500 1.500H5L7 3L9 1.500H15.500V9L11 12L8 15L3 12L0.500 8Z" fill={SKY} stroke={DB} /><path d="M7 3L15.500 2V7L9 8Z" fill={G} stroke={D} /></>,
  <><path d="M0.800 12.500A7.200 7.200 0 0 1 15.200 12.500H11.500A3.500 3.500 0 0 0 4.500 12.500Z" fill="#fff" stroke={DB} /><path d="M0.800 12.500A7.200 7.200 0 0 1 9 5.300L8.500 9A3.500 3.500 0 0 0 4.500 12.500Z" fill={SKY} stroke={DB} /><path d="M8 13L11.500 6.500" stroke={INK} strokeWidth="1.500" /></>,
  <>{r(0.5, 1.5, 15, 13, "#fff", D)}<text x="8" y="10.500" fontSize="8" fontFamily="Open Sans" textAnchor="middle" fill={BLUE} stroke="none" textLength="12.500">123</text><path d="M2 12.500H14" stroke={G} /></>,
  <>{r(0.5, 0.5, 15, 15, "#fff", D)}<path d="M3.500 3V13" stroke={BLUE} /><path d="M5 4.500H11M5 10.500H10" stroke={BLUE} strokeWidth="1.500" /><path d="M5 7.500H13M5 12.500H12" stroke={G} /></>,
  <>{r(0.5, 1.5, 15, 13, "#fff", D)}<path d="M2 9L4.500 4L7 9Z" fill={GREEN} stroke="none" /><path d="M8.500 4H14L11.300 9Z" fill="#d83b3b" stroke="none" /><path d="M2 12.500H14" stroke={G} strokeWidth="2" /></>,
  <><path d="M7 14.500H0.500V0.500H15.500V6M0.500 3.500H15.500" stroke={D} fill="#fff" /><path d="M3 6.500H5M3 10.500H5" stroke={D} strokeWidth="2" /><path d="M7 7.500H16L12.800 11V15.500H10.500V11Z" fill="#fff" stroke={INK} /></>,
  <>{r(0.5, 0.5, 15, 15, "#fff", D)}<path d="M1 1H15V3.500H1Z" fill={G} stroke="none" /><path d="M0.500 4.500H15.500M0.500 8.500H15.500M0.500 12H15.500M5.500 4V15M10.500 4V15" stroke={D} /></>,
  <>{r(0.5, 0.5, 15, 15, SKY, DB)}<path d="M1 4H6V15H1ZM6 4H11V8H6Z" fill="#fff" stroke="none" /><path d="M1 1H15V3.500H1Z" fill={G} stroke="none" /><path d="M0.500 4.500H15.500M0.500 8.500H15.500M0.500 12H15.500M5.500 4V15M10.500 4V15" stroke={DB} />{r(0.5, 0.5, 15, 15, "none", INK)}</>,
  <text x="3" y="13.500" fontSize="15" fontWeight="700" fontFamily="Open Sans" fill={BLUE} stroke="none" textLength="9" lengthAdjust="spacingAndGlyphs">R</text>,
  <text x="0" y="13" fontSize="14" fontWeight="600" fontFamily="Open Sans" fill={BLUE} stroke="none" textLength="16" lengthAdjust="spacingAndGlyphs">Py</text>,
  <>{axes}<path d="M1 3.500H11M1 7.500H9M1 11.500H5" stroke={D} /><circle cx="13" cy="3.500" r="2" fill={SKY} stroke={DB} /><circle cx="10" cy="7.500" r="1.200" fill="#fff" stroke={D} /><circle cx="6.500" cy="11.500" r="1.200" fill="#fff" stroke={D} /></>,
  <>{r(0.5, 6.500, 5, 3, SKY, DB)}{r(9.5, 0.5, 6, 4, SKY, DB)}{r(9.5, 5.800, 6, 4, SKY, DB)}{r(9.5, 11.500, 6, 4, SKY, DB)}<path d="M5.500 8H9.500M7.500 8V2.500H9.500M7.500 8V13.500H9.500" stroke={INK} /></>,
  <path d="M0.500 1.500H15.500V11.500H6L2.500 15V11.500H0.500Z" fill="#fff" stroke={BLUE} />,
  <><path d="M2.500 4V0.500H10L13.500 4V15.500H2.500V11" fill="#fff" stroke={D} /><circle cx="2.500" cy="6.500" r="1.500" fill={SKY} stroke={DB} /><path d="M4.500 7H11M5 10H11" stroke={BLUE} /><path d="M5 13H9" stroke={G} /></>,
  <><path d="M1.500 0.500H9.500L13.500 4.500V16H1.500Z" fill="#fff" stroke={INK} /><path d="M4.500 10V14M7.500 12V14M10.500 8V14" stroke={INK} strokeWidth="2" /></>,
  <>{r(1.500, 1.500, 14, 13, SKY, DB)}<path d="M4 14L8 9L10 4L15 3L12 8L12 14Z" fill="#fff" stroke={DB} /><path d="M2.500 0A3 3 0 0 1 5.500 3C5.500 5 3 8.500 2.500 9C2 8.500 0 5 0 3A3 3 0 0 1 2.500 0ZM12 14H15V11H17V16H12Z" fill={ORANGE} stroke="none" /></>,
  <g stroke="#8b3a9b"><path d="M5.500 1H10.500L15.500 8L10.500 15H5.500L0.500 8Z" fill="#fff" /><path d="M8 5L11 8L8 11L5 8ZM5 3L8 5L11 3M5 13L8 11L11 13M3 8H5M11 8H13" /></g>,
  <><path d="M0.500 1.500H9.500L15.500 8L9.500 14.500H0.500L5.500 8Z" fill="#fff" stroke={BLUE} strokeWidth="1.300" /><path d="M3 14L12 4M7 14L14 6.500M1 5L4 2M4 8L10 2" stroke={BLUE} /></>,
  <path d="M1 7.500H3M7 7.500H9M13 7.500H15" stroke={INK} strokeWidth="1.500" />,
];

function Chev({ d, w = 7, h = 12, color = "#605e5c", className = "" }) {
  return (
    <svg width={w} height={h} viewBox={"0 0 " + w + " " + h} fill="none" stroke={color} strokeWidth="1.100" className={"shrink-0 " + className}>
      <path d={d} />
    </svg>
  );
}
const RIGHT = "M1 0.500L6.500 6L1 11.500";
const LEFT = "M6 0.500L0.500 6L6 11.500";

function Chip({ children }) {
  return (
    <div className="flex h-[23px] items-center rounded-[2px] border border-[#b8b6b4] bg-[#edebe9] pr-[3px] pl-[4px]">
      <span className="flex-1">{children}</span>
      <Chev w={12} h={7} d="M0.500 0.500L6 6L11.500 0.500" />
      <Chev w={9} h={9} d="M0.500 0.500L8.500 8.500M8.500 0.500L0.500 8.500" className="ml-[6px]" />
    </div>
  );
}

function Well({ label, labelH, boxH, chip, text = "Add data fields here" }) {
  return (
    <>
      <div className={"flex items-center pl-2 " + labelH}>{label}</div>
      <div className={"mr-[6px] ml-[4px] border border-dashed border-[#bdbbb9] bg-white " + boxH}>
        {chip ? <div className="px-[2px] pt-[3px]"><Chip>{chip}</Chip></div> : <div className="flex h-full items-center pl-[10px]">{text}</div>}
      </div>
    </>
  );
}

function VizPane() {
  return (
    <div className="flex w-[181px] shrink-0 flex-col border-l border-[#dad8d6] bg-[#f3f2f1] text-[11.700px] tracking-[-0.018em] text-[#252423]">
      <div className="flex h-[49px] items-center justify-between pr-[12px] pl-[12px]">
        <span className="text-[15.500px] font-semibold tracking-[-0.025em] text-[#484644]">Visualizations</span>
        <Chev d={RIGHT} className="mb-[5px]" />
      </div>
      <div className="ml-[3px] grid w-[168px] grid-cols-[repeat(6,28px)] auto-rows-[24px]">
        {viz.map((v, i) => (
          <div
            key={i}
            className={"flex h-[22px] w-[22px] items-center justify-center " + (i === 18 ? "border-2 border-[#605e5c] bg-[#c8c6c4]" : "")}
          >
            <svg width="16" height="16" viewBox="0 0 16 16" fill="none" strokeWidth="1" className="shrink-0 overflow-visible">{v}</svg>
          </div>
        ))}
      </div>
      <div className="-mt-px flex h-[37px] items-end border-t border-[#dad8d6] pl-[12px]">
        <div className="flex h-[37px] w-10 flex-col items-center justify-between border-b-4 border-[#f2c811] pt-[8px]">
          <svg width="20" height="21" viewBox="0 0 20 21" fill="none" stroke={INK} strokeWidth="1.200">
            <path d="M0 1H16" />
            <path d="M0.600 4H19.400V10H0.600ZM0.600 13H19.400V19.500H0.600Z" strokeDasharray="2 1.300" />
          </svg>
        </div>
        <svg width="20" height="21" viewBox="0 0 20 21" fill="none" stroke={INK} strokeWidth="1.200" className="mb-[8px] ml-[10px]">
          <path d="M0.600 1.500H15.500V6.500H0.600ZM15.500 3.500H18.400V9H9V11M7 11H11V20H7Z" />
        </svg>
        <svg width="21" height="21" viewBox="0 0 21 21" fill="none" stroke={INK} strokeWidth="1.200" className="mb-[8px] ml-[19px]">
          <circle cx="9" cy="9.500" r="8" />
          <path d="M15 15L20.500 20.500M1 10L6 6L10 9L16 4M5.500 16V12M8.500 17V11M11.500 16V12M14 14V10" />
        </svg>
      </div>
      <div className="flex flex-col">
        <Well label="Location" labelH="h-[27px] pl-3" boxH="h-[37px]" chip="City" />
        <Well label="Legend" labelH="h-[32px] pt-[5px] pl-3" boxH="h-[28px]" />
        <Well label="Latitude" labelH="h-[32px] pt-[5px] pl-3" boxH="h-[28px]" />
        <Well label="Longitude" labelH="h-[32px] pt-[5px] pl-3" boxH="h-[28px]" />
        <Well label="Size" labelH="h-[32px] pt-[5px] pl-3" boxH="h-[30px]" chip="Quantity" />
        <Well label="Tooltips" labelH="h-[32px] pt-[5px] pl-3" boxH="h-[28px]" />
        <div className="flex h-[49px] items-center pl-[14px] text-[15.500px] font-semibold tracking-[-0.018em] text-[#484644]">Drill through</div>
        <div className="flex h-[16px] items-center pl-[9px]">Cross-report</div>
        <div className="flex h-[42px] items-center pl-[18px]">
          <span className="w-[21px]">Off</span>
          <svg width="31" height="12" viewBox="0 0 31 12" fill="none" stroke="#605e5c" strokeWidth="2"><circle cx="6" cy="6" r="5" /><path d="M11 6H30" /></svg>
        </div>
        <div className="flex h-[28px] items-center pl-[9px]">Keep all filters</div>
        <div className="flex h-[30px] items-center pl-[18px]">
          <span className="w-[20px]">On</span>
          <svg width="31" height="12" viewBox="0 0 31 12" fill="none" stroke="#605e5c" strokeWidth="2"><path d="M0 6H20" /><circle cx="24" cy="6" r="6" fill="#605e5c" stroke="none" /></svg>
        </div>
        <div className="mt-[7px] mr-[6px] ml-[4px] flex h-[26px] items-center border border-dashed border-[#bdbbb9] bg-white pl-[8px] whitespace-nowrap">Add drill-through fields here</div>
      </div>
    </div>
  );
}

/* ---------- fields ---------- */

const fields = [
  ["t", "DimCity", 1],
  ["f", "City", "globe", 1], ["f", "City Key"], ["f", "Continent", "globe"], ["f", "Country"], ["f", "Latest Recorde..."], ["f", "Latitude"],
  ["f", "Lineage Key"], ["f", "Location"], ["f", "Region"], ["f", "Sales Territory"], ["f", "State Province"], ["f", "Subregion"],
  ["f", "Valid From"], ["f", "Valid To"], ["f", "WWI City ID"],
  ["t", "DimCustomer"], ["t", "DimEmployee"], ["t", "DimStockItem"], ["t", "FactSale", 1],
  ["f", "Bill To Custome...", "sum"], ["f", "City Key"], ["f", "Customer Key", "sum"], ["f", "Delivery Date K...", "cal"], ["f", "Description"],
  ["f", "Invoice Date Key", "cal"], ["f", "Lineage Key", "sum"], ["f", "Package"], ["f", "Profit", "sum"], ["f", "Quantity", "sum", 1],
  ["f", "Sale Key", "sum"], ["f", "Salesperson Key"],
];

const fieldIcons = {
  globe: <path d="M8 0.600A7.400 7.400 0 1 0 8 15.400A7.400 7.400 0 1 0 8 0.600ZM8 0.600C3.500 4 3.500 12 8 15.400C12.500 12 12.500 4 8 0.600M8 0.600V15.400M1.500 5H14.500M1.500 11H14.500" />,
  sum: <path d="M13 3.500V1.500H3.500L9.500 8L3.500 14.500H13V12.500" />,
  cal: (
    <>
      <path d="M0.500 1.500H15.500V14.500H0.500ZM0.500 4.500H15.500M3.500 0V3M12.500 0V3" />
      <path d="M3 7.500H14M3 9.500H14M3 11.500H12" strokeDasharray="1 1" strokeWidth="1" />
    </>
  ),
};

function FieldRow({ row }) {
  const [kind, name, icon, on] = row;
  if (kind === "t") {
    return (
      <div className="flex h-6 items-center pl-[7px]">
        <div className="flex w-[15px] items-center">
          {icon ? <Chev w={12} h={7} d="M0.500 0.500L6 6L11.500 0.500" color="#797775" /> : <Chev d={RIGHT} color="#797775" className="ml-[2px]" />}
        </div>
        <div className="relative w-[19px]">
          <svg width="13" height="13" viewBox="0 0 13 13" fill="none" stroke="#252423" strokeWidth="1">
            <path d="M0.500 0.500H12.500V12.500H0.500ZM0 2H13M0.500 5.500H12.500M0.500 9H12.500M4.500 2V12.500M8.500 2V12.500" />
          </svg>
          {icon && (
            <svg width="12" height="12" viewBox="0 0 12 12" className="absolute top-[5px] left-[7px]">
              <circle cx="6" cy="6" r="6" fill="#f2c811" />
              <path d="M3.500 6L5.500 7.500L8.500 4.500" fill="none" stroke="#252423" strokeWidth="1.500" />
            </svg>
          )}
        </div>
        <span>{name}</span>
      </div>
    );
  }
  return (
    <div className="flex h-6 items-center pl-6">
      <div className="w-[14px]">{icon === "cal" && <Chev d={RIGHT} color="#797775" />}</div>
      {on ? (
        <svg width="12" height="12" viewBox="0 0 12 12" className="-mt-px"><rect width="12" height="12" rx="2" fill="#f2c811" /><path d="M2.500 6L5 8.500L9.500 3.500" fill="none" stroke="#7a6210" strokeWidth="1.100" /></svg>
      ) : (
        <span className="-mt-px h-3 w-3 rounded-[2px] border border-[#797775]" />
      )}
      <div className="-mt-px ml-[6px] w-5">
        {icon && (
          <svg width="16" height="16" viewBox="0 0 16 16" fill="none" stroke="#252423" strokeWidth="1">
            {fieldIcons[icon]}
          </svg>
        )}
      </div>
      <span className="whitespace-nowrap">{name}</span>
    </div>
  );
}

function FieldsPane() {
  return (
    <div className="relative flex w-[181px] shrink-0 flex-col border-l border-[#dad8d6] bg-[#f3f2f1] text-[11.650px] tracking-[-0.018em] text-[#3b3a39]">
      <div className="flex h-[48px] items-center justify-between pr-[12px] pl-[12px]">
        <span className="text-[15.500px] font-semibold tracking-[-0.02em] text-[#484644]">Fields</span>
        <Chev d={RIGHT} className="mb-[4px]" />
      </div>
      <div className="ml-[4px] flex h-[27px] w-[172px] items-center rounded-[2px] border border-[#605e5c] bg-white pl-[7px]">
        <SearchGlyph s={15} color="#605e5c" />
        <span className="ml-[6px] pt-px text-[13.300px] text-[#484644]">Search</span>
      </div>
      <div className="mt-[6px] border-t border-[#dad8d6]" />
      <div className="h-[774px] overflow-hidden pt-[10px]">
        {fields.map((f, i) => (
          <FieldRow key={i} row={f} />
        ))}
      </div>
      <span className="absolute top-[90px] right-[4px] h-[595px] w-2 bg-[#c8c6c4]" />
    </div>
  );
}

function FiltersPane() {
  return (
    <div className="flex h-[821px] w-[33px] shrink-0 flex-col items-center border-l border-[#a19f9d] bg-white">
      <Chev d={LEFT} className="mt-[16px]" />
      <svg width="12" height="12" viewBox="0 0 12 12" fill="none" stroke="#605e5c" strokeWidth="1" className="mt-[36px] ml-[3px]">
        <path d="M11.300 0.600V11.300L6 7H0.500V5H6Z" />
      </svg>
      <span className="mt-[11px] text-[15.200px] font-semibold tracking-[-0.02em] text-[#252423] [writing-mode:vertical-rl]">Filters</span>
    </div>
  );
}

/* ---------- taskbar ---------- */

function TaskIcon({ w, children, open, active }) {
  return (
    <div className={"relative flex h-10 items-center justify-center " + w + (active ? " bg-[#4a5056]" : "")}>
      <svg width="24" height="24" viewBox="0 0 24 24" fill="none">{children}</svg>
      {open && <span className={"absolute bottom-0 h-[2px] bg-[#76b9ed] " + (active ? "w-full" : "w-10")} />}
    </div>
  );
}

function Taskbar() {
  return (
    <div className="flex h-10 bg-[#1b222b] text-white">
      <div className="flex w-12 items-center justify-center">
        <svg width="16" height="16" viewBox="0 0 16 16" fill="#fff"><path d="M0 2.300L6.500 1.400V7.500H0ZM7.500 1.200L16 0V7.500H7.500ZM0 8.500H6.500V14.600L0 13.700ZM7.500 8.500H16V16L7.500 14.800Z" /></svg>
      </div>
      <div className="flex w-[344px] items-center border border-[#c5c5c5] bg-[#f2f2f2] pl-[11px]">
        <SearchGlyph s={17} color="#252423" />
        <span className="ml-[11px] text-[15.200px] tracking-[-0.033em] text-[#3b3a39]">Type here to search</span>
      </div>
      <TaskIcon w="w-[48px]"><circle cx="12" cy="12" r="7" stroke="#fff" strokeWidth="2" /></TaskIcon>
      <TaskIcon w="w-[47px]"><path d="M4 4V6.500H15V4M4 20V17.500H15V20M4.500 9.500H14.500V14.500H4.500ZM19 4V7M19 11V20" stroke="#fff" strokeWidth="1.200" /><path d="M18 7.500H20V10H18Z" fill="#fff" /></TaskIcon>
      <TaskIcon w="w-[55px]">
        <defs>
          <linearGradient id="eg" x1="0" y1="0" x2="1" y2="0.600"><stop offset="0" stopColor="#1b9de2" /><stop offset="0.500" stopColor="#2cc3d5" /><stop offset="1" stopColor="#6fdf55" /></linearGradient>
        </defs>
        <circle cx="12" cy="12" r="12" fill="#1173c7" />
        <path d="M0.200 11C1 4 6 0 12 0C19 0 24 5 24 10.500C24 15 20.500 17 17 17C14.500 17 13.500 16 14.500 14.500C16 12 14 8.500 10.500 8C6 7.500 2 8.500 0.200 11Z" fill="url(#eg)" />
        <path d="M9.500 12C8.500 17 13 20.500 18 20C20 19.800 21.500 19 22.300 18.500C20 22.500 16 24 12.500 24C7.500 23 5 18 7 14Z" fill="#0c4f96" />
        <path d="M14.500 14.500C13.500 16 14.500 17 17 17C20 17 22.300 16 23.500 13.500C24 17 21 20 17.500 20C12.500 20 9.500 16 10 12.500C10.500 10.500 14 11 14.500 14.500Z" fill="#1b222b" />
      </TaskIcon>
      <TaskIcon w="w-[42px]" open>
        <path d="M1 4H9L11 6.500H22V20H1Z" fill="#e8a62a" />
        <path d="M1 8H23V20.500H1Z" fill="#fdd267" />
        <path d="M5 21.500V13H19V21.500H15.500V17H8.500V21.500Z" fill="#3a90d8" />
      </TaskIcon>
      <TaskIcon w="w-[56px]">
        <path d="M8 6V1.500H16V6" stroke="#fff" strokeWidth="1.500" />
        <path d="M1 6H23V23H2.500L1 21.500Z" fill="#f4f4f4" />
        <path d="M7.500 10H11.500V14H7.500Z" fill="#f25022" /><path d="M12.500 10H16.500V14H12.500Z" fill="#7fba00" /><path d="M7.500 15H11.500V19H7.500Z" fill="#00a4ef" /><path d="M12.500 15H16.500V19H12.500Z" fill="#ffb900" />
      </TaskIcon>
      <TaskIcon w="w-[44px]">
        <path d="M0 8L12 1L24 8V22H0Z" fill="#1e76c0" />
        <path d="M2 8H22L12 15.500Z" fill="#fff" />
        <path d="M0 8.500L12 15.500L24 8.500V22H0Z" fill="#2fb0ee" />
        <path d="M2 8H22L12 15.500Z" fill="#fff" />
        <path d="M0 22L24 8.500V22Z" fill="#45bdf3" />
      </TaskIcon>
      <TaskIcon w="w-[54px]" open>
        <circle cx="12" cy="12" r="11" fill="#fbc116" />
        <path d="M12 12L2.500 6.500A11 11 0 0 1 21.500 6.500H12Z" fill="#e33b2e" />
        <path d="M12 12L2.500 6.500A11 11 0 0 0 11 23L16.500 14.500Z" fill="#2da94f" />
        <circle cx="12" cy="12" r="5.300" fill="#fff" /><circle cx="12" cy="12" r="4.200" fill="#4285f4" />
      </TaskIcon>
      <TaskIcon w="mr-[3px] w-[44px]" open>
        <path d="M13 3H23V21H13Z" fill="#fff" stroke="#2b579a" />
        <path d="M15 7.500H21M15 10.500H21M15 13.500H21M15 16.500H21" stroke="#2b579a" />
        <path d="M1 3.500L14.500 1V23L1 20.500Z" fill="#2b579a" />
        <path d="M4 8.500L5.800 15.500L7.800 9L9.800 15.500L11.500 8.500" stroke="#fff" strokeWidth="1.300" />
      </TaskIcon>
      <TaskIcon w="w-[48px]" open active>
        <path d="M13 0.500H21.500V23.500H13Z" fill="#c98a0a" />
        <path d="M12 0.500H20.500V22H12Z" fill="#e0a312" />
        <path d="M8 6.500H16.500V23.500H8Z" fill="#edbd2e" />
        <path d="M3 12.500H11.500V23.500H3Z" fill="#f8d75e" />
      </TaskIcon>
      <div className="flex flex-1 items-center justify-end">
        <svg width="22" height="18" viewBox="0 0 22 18" className="mr-[9px]">
          <circle cx="7" cy="6" r="6" fill="#f9b530" />
          <path d="M5 17C-0.500 17 -0.500 10 4.500 9.500C5.500 3.500 13.500 3.500 14.500 8C21 7.500 21.500 16.500 16 17Z" fill="#cfe6f8" />
          <path d="M11 17C15 10 19 11 20 14C19.500 16.500 17.500 17 16 17Z" fill="#9ccbee" />
        </svg>
        <span className="w-[36px] text-[14px] tracking-[-0.04em]">56°F</span>
        <span className="w-[103px] text-[14px] tracking-[-0.02em] whitespace-nowrap">Mostly cloudy</span>
        <Chev w={13} h={8} d="M0.500 7L6.500 1L12.500 7" color="#fff" />
        <svg width="18" height="12" viewBox="0 0 18 12" className="ml-[9px]">
          <path d="M4 11.500C-0.500 11.500 -0.500 6.500 3 6C4.500 1 10.500 0 12 4.500C17 4 18.500 11.500 14 11.500Z" fill="#f2f2f2" />
          <path d="M5 4C7 0 11 0.500 12 4.500C9 4 8 6 7 7Z" fill="#9a9a9a" />
        </svg>
        <svg width="17" height="14" viewBox="0 0 17 14" fill="none" stroke="#fff" className="ml-[7px]">
          <path d="M5 2.500H16.500V10.500H4.500V6M7 13.500H13M10 10.500V13.500M0.500 0.500H5.500V4.500H0.500ZM3 4.500V9" />
        </svg>
        <svg width="17" height="14" viewBox="0 0 17 14" fill="none" stroke="#fff" strokeWidth="1.100" className="ml-[7px]">
          <path d="M0.500 5H3L6 1.500V12.500L3 9H0.500ZM8.500 5C9.500 6 9.500 8 8.500 9M10.800 3C13 5 13 9 10.800 11M13.200 1C16.500 4 16.500 10 13.200 13" />
        </svg>
        <div className="ml-[6px] w-[58px] text-center text-[11.600px] leading-[18px] tracking-[-0.035em] whitespace-nowrap">
          <div>12:14 PM</div>
          <div>11/18/2021</div>
        </div>
        <svg width="16" height="17" viewBox="0 0 16 17" fill="none" stroke="#fff" strokeWidth="1.100" className="ml-[14px]">
          <path d="M0.600 1H15.400V13H10.500L8 15.800L5.500 13H0.600Z" />
        </svg>
        <div className="ml-[20px] h-10 w-[5px] border-l border-[#5b6168]" />
      </div>
    </div>
  );
}

export default function App() {
  return (
    <div className="flex h-[1080px] w-[1920px] flex-col overflow-hidden bg-[#f3f2f1] font-['Open_Sans','Noto_Sans',sans-serif]">
      <TitleBar />
      <TabsRow />
      <Ribbon />
      <div className="flex h-[856px]">
        <Rail />
        <div className="flex w-[1484px] flex-col">
          <Canvas />
          <PageTabs />
        </div>
        <FiltersPane />
        <VizPane />
        <FieldsPane />
      </div>
      <div className="flex h-6 items-center border-t border-[#dad8d6] bg-[#f3f2f1] pl-[5px] text-[11.800px] tracking-[-0.015em] text-[#484644]">Page 2 of 2</div>
      <Taskbar />
    </div>
  );
}
